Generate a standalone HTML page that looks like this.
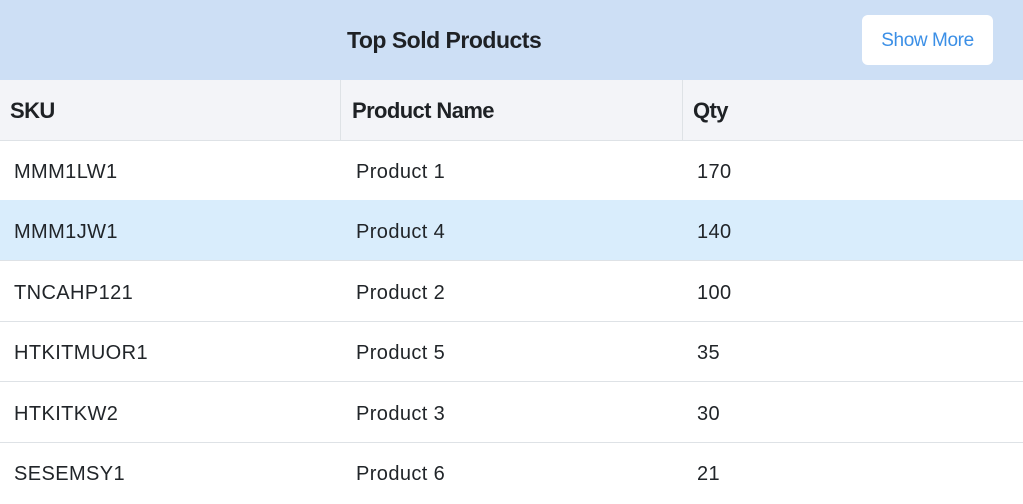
<!DOCTYPE html>
<html><head><meta charset="utf-8"><style>
*{margin:0;padding:0;box-sizing:border-box}
body{width:1023px;height:502px;overflow:hidden;background:#fff;font-family:"Liberation Sans",sans-serif;color:#212529;position:relative}
.hdr{position:absolute;left:0;top:0;width:1023px;height:80px;background:#cddff5}
.title{position:absolute;left:347px;top:27px;font-size:23px;font-weight:bold;letter-spacing:-0.5px;color:#1e2125}
.btn{position:absolute;left:862px;top:15px;width:131px;height:50px;background:#fff;border-radius:6px;color:#3b8fe6;font-size:19px;line-height:52px;text-align:center;letter-spacing:-0.4px}
.th{position:absolute;top:80px;left:0;width:1023px;height:61px;background:#f3f4f8;border-bottom:1px solid #dee2e6}
.th div{position:absolute;top:1px;height:60px;line-height:60px;font-size:22px;font-weight:bold;letter-spacing:-0.6px;color:#1e2125}
.vl{position:absolute;top:80px;height:60px;width:1px;background:#dee2e6}
.row{position:absolute;left:0;width:1023px;height:61px;border-bottom:1px solid #dee2e6}
.row div{position:absolute;top:2px;height:60px;line-height:60px;font-size:20px;letter-spacing:0.4px;color:#212529}
</style></head><body>
<div class="hdr"><div class="title">Top Sold Products</div><div class="btn">Show More</div></div>
<div class="th"><div style="left:10px">SKU</div><div style="left:352px">Product Name</div><div style="left:693px">Qty</div></div>
<div class="vl" style="left:340px"></div><div class="vl" style="left:682px"></div>
<div class="row" style="top:140px"><div style="left:14px">MMM1LW1</div><div style="left:356px">Product 1</div><div style="left:697px">170</div></div>
<div class="row" style="top:200px;background:#d9edfc"><div style="left:14px">MMM1JW1</div><div style="left:356px">Product 4</div><div style="left:697px">140</div></div>
<div class="row" style="top:261px"><div style="left:14px">TNCAHP121</div><div style="left:356px">Product 2</div><div style="left:697px">100</div></div>
<div class="row" style="top:321px"><div style="left:14px">HTKITMUOR1</div><div style="left:356px">Product 5</div><div style="left:697px">35</div></div>
<div class="row" style="top:382px"><div style="left:14px">HTKITKW2</div><div style="left:356px">Product 3</div><div style="left:697px">30</div></div>
<div class="row" style="top:442px;border-bottom:none"><div style="left:14px">SESEMSY1</div><div style="left:356px">Product 6</div><div style="left:697px">21</div></div>
</body></html>
